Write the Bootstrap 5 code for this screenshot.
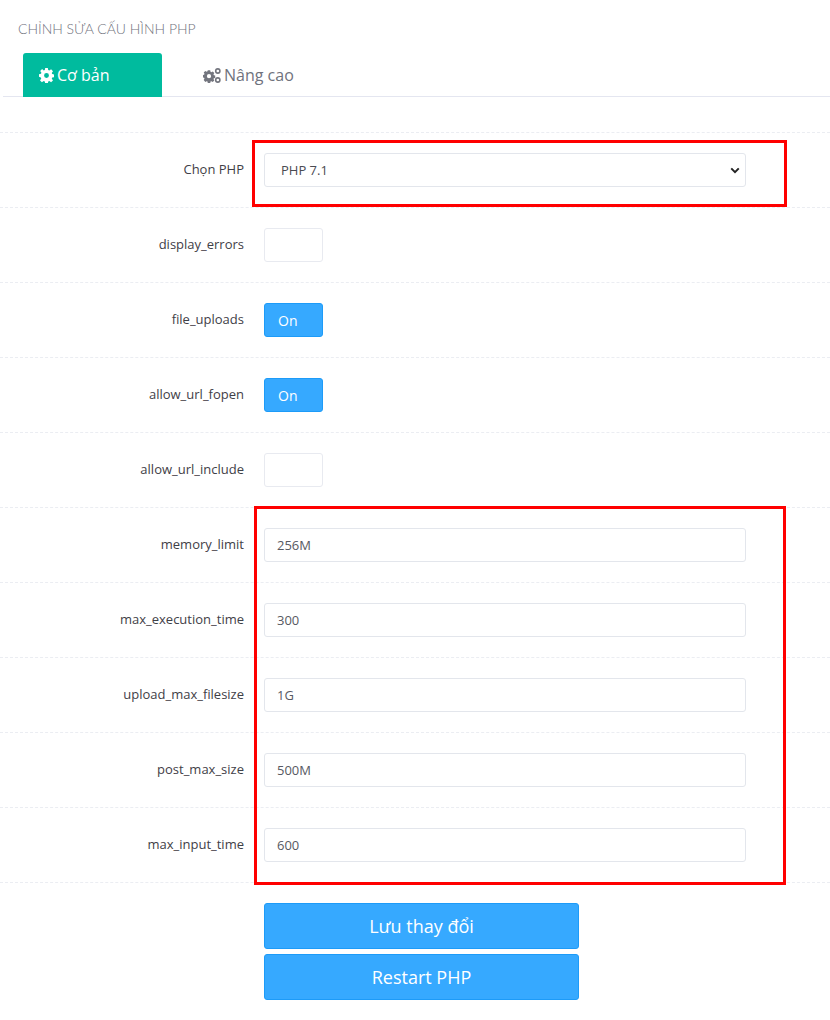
<!DOCTYPE html>
<html lang="vi"><head><meta charset="utf-8">
<link rel="stylesheet" href="https://cdn.jsdelivr.net/npm/bootstrap@5.3.0/dist/css/bootstrap.min.css">
<style>
body{background:#fff;font-family:"Open Sans",sans-serif;font-size:13px;color:#575962;height:1020px;overflow:hidden}
.pg{position:relative;height:1020px}
.ttl{font-family:Lato,sans-serif;font-weight:300;font-size:14px;color:#6f727d;padding:20px 0 0 18px;line-height:18px;height:53px}
.tabbar{margin-left:3px;border-bottom:1px solid #e4e6f0;height:44px;padding-left:20px;gap:0}
.tabx{width:139px;height:44px;font-size:16px;border-radius:3px 3px 0 0;line-height:44px;padding-left:16px;color:#6f727d;text-decoration:none;display:flex;align-items:center;gap:3px}
.tabx.on{background:#00bb9e;color:#fff}
.tabx.alt{margin-left:16px;padding-left:25px;gap:3px}
.tabx svg{flex:none}
.frm{margin-top:35px;border-top:1px dashed #ebedf2}
.rw{height:75px;border-bottom:1px dashed #ebedf2;align-items:center}
.lbl{width:244px;text-align:right;font-size:13px;color:#3f4047;font-weight:400;margin:0}
.ctl{margin-left:20px;width:482px;flex:none}
.ctl .form-control,.ctl .form-select{height:34px;font-size:13px;border:1px solid #e3e6ec;border-radius:3px;color:#575962;padding:0 12px;box-shadow:none}
.ctl .form-select{padding:1px 0 0 16px;color:#4a4b52;background-size:10px 7px;background-position:right 5px center;background-image:url("data:image/svg+xml,%3csvg xmlns='http://www.w3.org/2000/svg' viewBox='0 0 12 8'%3e%3cpath fill='none' stroke='%23222' stroke-width='2.400' d='M1.500 1.500 6 6l4.500-4.500'/%3e%3c/svg%3e")}
.sw{width:59px;height:34px;border:1px solid #e8eaf0;border-radius:3px;background:#fff;color:#fff;font-size:14px;line-height:33px;padding-left:13px;display:block}
.sw.lit{background:#36a9ff;border-color:#1d9bf8}
.acts{margin-left:264px;padding-top:20px;width:315px;gap:5px}
.bigb{height:46px;background:#36a9ff;border:1px solid #1d9bf8;border-radius:3px;font-size:18px;color:#fff;padding:0}
.bigb:hover{background:#36a9ff;color:#fff}
.redbox{position:absolute;border:3px solid #f00;pointer-events:none}
.rb1{left:252px;top:140px;width:535px;height:67px}
.rb2{left:254px;top:506px;width:532px;height:379px}
</style></head><body>
<div class="pg">
<div class="ttl">CHỈNH SỬA CẤU HÌNH PHP</div>
<div class="tabbar d-flex">
<a class="tabx on" href="#"><svg width="15" height="15" viewBox="0 0 16 16"><path fill="#fff" fill-rule="evenodd" d="M6.600 0h2.800l.4 2.200 1.200.5 1.900-1.300 2 2-1.300 1.900.5 1.200 2.200.4v2.800l-2.200.4-.5 1.200 1.300 1.900-2 2-1.900-1.300-1.200.5-.4 2.200H6.600l-.4-2.200-1.200-.5-1.900 1.300-2-2 1.300-1.900-.5-1.200L0 9.400V6.600l2.100-.4.500-1.200L1.300 3.100l2-2L5 2.700l1.200-.5zM8 5.400a2.600 2.600 0 1 0 0 5.200 2.600 2.600 0 0 0 0-5.200z"/></svg>Cơ bản</a>
<a class="tabx alt" href="#"><svg width="18" height="15" viewBox="0 0 18 15"><path fill="#73757e" fill-rule="evenodd" d="M4.800 2.300h2.400l.3 1.500.9.400 1.300-.8 1.600 1.600-.8 1.300.4.900 1.300.3v2.400l-1.300.3-.4.900.8 1.300-1.600 1.600-1.300-.8-.9.400-.3 1.500H4.800l-.3-1.500-.9-.4-1.300.8L.7 11.900l.8-1.300-.4-.9L0 9.400V7l1.100-.3.400-.9-.8-1.300 1.600-1.600 1.300.8.900-.4zM6 6.100a2.100 2.100 0 1 0 0 4.200 2.100 2.100 0 0 0 0-4.200z"/><circle cx="14.800" cy="3" r="2.100" fill="none" stroke="#73757e" stroke-width="1.600"/><circle cx="14.800" cy="12" r="2.100" fill="none" stroke="#73757e" stroke-width="1.600"/></svg>Nâng cao</a>
</div>
<form class="frm">
<div class="rw d-flex"><label class="lbl">Chọn PHP</label><div class="ctl"><select class="form-select"><option>PHP 7.1</option></select></div></div>
<div class="rw d-flex"><label class="lbl">display_errors</label><div class="ctl"><span class="sw"></span></div></div>
<div class="rw d-flex"><label class="lbl">file_uploads</label><div class="ctl"><span class="sw lit">On</span></div></div>
<div class="rw d-flex"><label class="lbl">allow_url_fopen</label><div class="ctl"><span class="sw lit">On</span></div></div>
<div class="rw d-flex"><label class="lbl">allow_url_include</label><div class="ctl"><span class="sw"></span></div></div>
<div class="rw d-flex"><label class="lbl">memory_limit</label><div class="ctl"><input class="form-control" value="256M"></div></div>
<div class="rw d-flex"><label class="lbl">max_execution_time</label><div class="ctl"><input class="form-control" value="300"></div></div>
<div class="rw d-flex"><label class="lbl">upload_max_filesize</label><div class="ctl"><input class="form-control" value="1G"></div></div>
<div class="rw d-flex"><label class="lbl">post_max_size</label><div class="ctl"><input class="form-control" value="500M"></div></div>
<div class="rw d-flex"><label class="lbl">max_input_time</label><div class="ctl"><input class="form-control" value="600"></div></div>
<div class="acts d-flex flex-column">
<button type="button" class="btn bigb">Lưu thay đổi</button>
<button type="button" class="btn bigb">Restart PHP</button>
</div>
</form>
<div class="redbox rb1"></div>
<div class="redbox rb2"></div>
</div>
<script src="https://cdn.jsdelivr.net/npm/bootstrap@5.3.0/dist/js/bootstrap.bundle.min.js"></script>
</body></html>
